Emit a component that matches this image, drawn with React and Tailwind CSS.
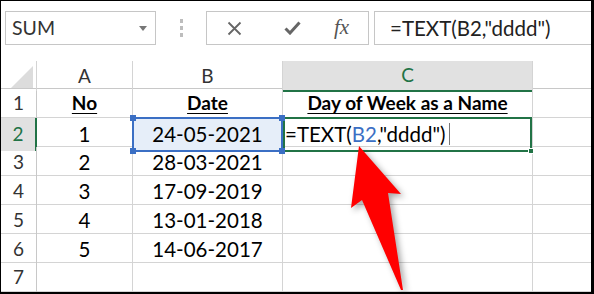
import React from "react";

const rows = [
  { n: 1, a: "No", b: "Date", c: "Day of Week as a Name", head: true },
  { n: 2, a: "1", b: "24-05-2021" },
  { n: 3, a: "2", b: "28-03-2021" },
  { n: 4, a: "3", b: "17-09-2019" },
  { n: 5, a: "4", b: "13-01-2018" },
  { n: 6, a: "5", b: "14-06-2017" },
  { n: 7, a: "", b: "" },
];

const cols = "grid grid-cols-[36px_96px_150px_249px_1fr]";

function Handle({ className }) {
  return <span className={`absolute w-[6px] h-[6px] ${className}`} />;
}

function Bold({ children }) {
  return <span className="font-bold text-[19px] underline underline-offset-[3px]">{children}</span>;
}

function FormulaBar() {
  return (
    <div className="h-[60px] flex items-start pt-[10px] pl-[4px] gap-[5px]">
      <div className="w-[151px] h-[34px] border border-[#c6c6c6] flex items-center justify-between pl-[6px] pr-[8px] text-[19.5px] text-[#333]">
        <span>SUM</span>
        <svg width="8" height="5" viewBox="0 0 8 5">
          <path d="M0 0h8L4 5z" fill="#777" />
        </svg>
      </div>
      <div className="w-[40px] h-[34px] flex flex-col items-center justify-center gap-[3px]">
        <span className="w-[3px] h-[4px] bg-[#bdbdbd]" />
        <span className="w-[3px] h-[4px] bg-[#bdbdbd]" />
        <span className="w-[3px] h-[4px] bg-[#bdbdbd]" />
      </div>
      <div className="w-[163px] h-[34px] border border-[#c6c6c6] flex items-center pl-[20px]">
        <svg width="15" height="15" viewBox="0 0 15 15" className="mr-[42px]">
          <path d="M1.5 1.5l12 12M13.5 1.5l-12 12" stroke="#666" strokeWidth="1.8" />
        </svg>
        <svg width="17" height="14" viewBox="0 0 17 14" className="mr-[33px]">
          <path d="M1.5 7.5l4.5 4.5L15.5 1.5" stroke="#666" strokeWidth="3" fill="none" />
        </svg>
        <span className="italic text-[21px] text-[#555] font-['Liberation_Serif',serif]">fx</span>
      </div>
      <div className="flex-1 h-[34px] border border-r-0 border-[#c6c6c6] flex items-center pl-[15px] text-[20.5px] text-[#222] whitespace-nowrap">
        =TEXT(B2,"dddd")
      </div>
    </div>
  );
}

function HeaderRow() {
  return (
    <div className={`${cols} h-[28px] border-b border-[#c8c8c8] text-[19px]`}>
      <div className="relative border-r border-[#d4d4d4]">
        <svg width="22" height="22" viewBox="0 0 22 22" className="absolute right-[3px] bottom-[3px]">
          <path d="M22 0V22H0z" fill="#dcdcdc" />
        </svg>
      </div>
      <div className="border-r border-[#d4d4d4] flex items-center justify-center text-[#333]">A</div>
      <div className="border-r border-[#d4d4d4] flex items-center justify-center text-[#333]">B</div>
      <div className="bg-[#e1e1e1] border-b-2 border-[#217346] -mb-px flex items-center justify-center text-[#217346]">C</div>
      <div className="border-l border-[#d4d4d4]" />
    </div>
  );
}

function Row({ r }) {
  const sel = r.n === 2;
  return (
    <div className={`${cols} h-[29px] border-b border-[#d4d4d4] text-[20.5px]`}>
      <div
        className={`flex items-center justify-center text-[19px] ${
          sel ? "bg-[#e1e1e1] border-r-2 border-[#217346] text-[#217346]" : "border-r border-[#c8c8c8] text-[#333]"
        }`}
      >
        {r.n}
      </div>
      <div className="border-r border-[#d4d4d4] flex items-center justify-center text-black">
        {r.head ? <Bold>{r.a}</Bold> : r.a}
      </div>
      {sel ? (
        <div className="relative -my-px -ml-px bg-[#e6eef9] border-2 border-[#3b6fc4] flex items-center justify-center text-black z-10">
          {r.b}
          <Handle className="bg-[#3b6fc4] -left-[4px] -top-[4px]" />
          <Handle className="bg-[#3b6fc4] -right-[4px] -top-[4px]" />
          <Handle className="bg-[#3b6fc4] -left-[4px] -bottom-[4px]" />
          <Handle className="bg-[#3b6fc4] -right-[4px] -bottom-[4px]" />
        </div>
      ) : (
        <div className="border-r border-[#d4d4d4] flex items-center justify-center text-black">
          {r.head ? <Bold>{r.b}</Bold> : r.b}
        </div>
      )}
      {sel ? (
        <div className="relative -my-px border-2 border-[#217346] flex items-center text-black whitespace-nowrap">
          <span>=TEXT(</span>
          <span className="text-[#3b6fc4]">B2</span>
          <span>,"dddd")</span>
          <span className="ml-[3px] w-px h-[22px] bg-[#777]" />
          <Handle className="bg-[#217346] -right-[4px] -bottom-[4px] border border-white" />
        </div>
      ) : (
        <div className="flex items-center justify-center text-black">
          {r.head ? <Bold>{r.c}</Bold> : r.c}
        </div>
      )}
      <div className="border-l border-[#d4d4d4]" />
    </div>
  );
}

export default function App() {
  return (
    <div className="relative w-[594px] h-[294px] overflow-hidden bg-white border-l border-t border-r-[3px] border-b-2 border-black font-['Lato',sans-serif]">
      <FormulaBar />
      <HeaderRow />
      {rows.map((r) => (
        <Row key={r.n} r={r} />
      ))}
      {/* red arrow overlay */}
      <svg
        width="594"
        height="294"
        viewBox="0 0 594 294"
        className="absolute -left-px -top-px pointer-events-none drop-shadow-[3px_3px_3px_rgba(0,0,0,0.35)]"
      >
        <path d="M359 146L401 194L388 193L403 290L401 290L362 200L351 208Z" fill="#ff0000" />
      </svg>
    </div>
  );
}
